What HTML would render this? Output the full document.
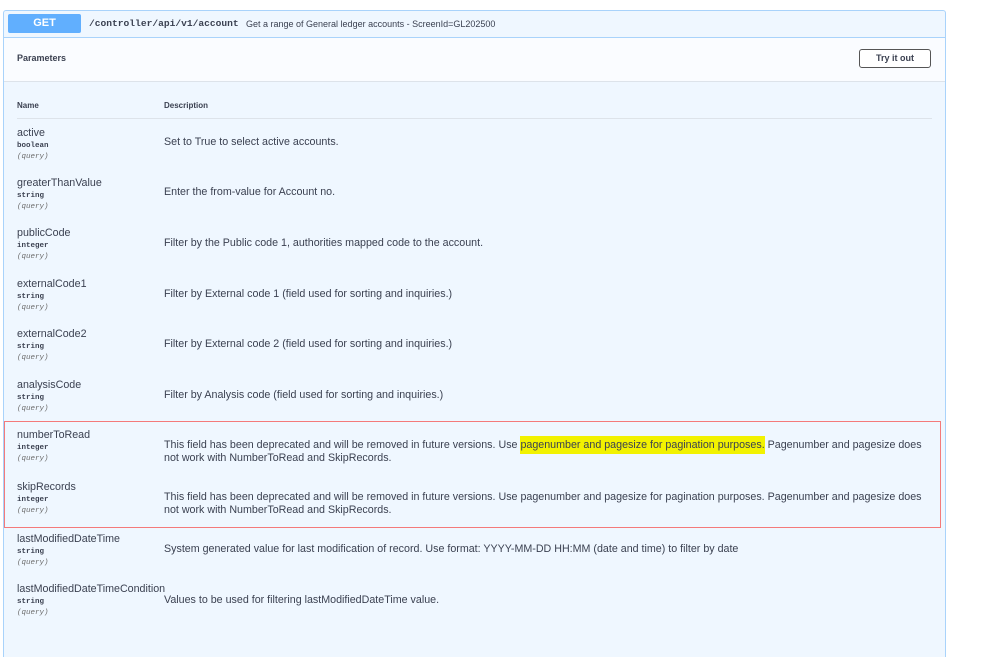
<!DOCTYPE html>
<html><head><style>
html,body{margin:0;width:999px;height:658px;overflow:hidden}
body{background:#fff;font-family:"Liberation Sans",sans-serif;color:#3b4151;position:relative}
.box{position:absolute;left:3px;top:10px;width:941px;height:646px;border:1px solid #a9d3fb;border-bottom:none;background:#eff7ff;border-radius:3px 3px 0 0}
.hdr{position:absolute;left:0;top:0;width:941px;height:26px;border-bottom:1px solid #a9d3fb}
.get{position:absolute;left:4px;top:3px;width:73px;height:19px;background:#61affe;border-radius:2px;color:#fff;font-weight:bold;font-size:11px;text-align:center;line-height:19px}
.path{position:absolute;left:85px;top:7px;font-family:"Liberation Mono",monospace;font-weight:bold;font-size:9.6px;color:#3b4151}
.sum{position:absolute;left:242px;top:8px;font-size:9px}
.ps{position:absolute;left:0;top:27px;width:941px;height:43px;background:#fafcff;border-bottom:1px solid #dde3ea}
.pt{position:absolute;left:13px;top:15px;font-weight:bold;font-size:9px}
.try{position:absolute;left:855px;top:11px;width:70px;height:17px;border:1.5px solid #555;border-radius:3px;background:#fff;font-weight:bold;font-size:9px;text-align:center;line-height:17px}
.th{position:absolute;top:101px;font-size:8px;font-weight:bold}
.line{position:absolute;left:17px;top:118px;width:915px;height:1px;background:#dde3ea}
.row{position:absolute;left:17px}
.n{font-size:10.7px;color:#3b4151}
.t{font-family:"Liberation Mono",monospace;font-size:7.5px;font-weight:bold;margin-top:3px}
.q{font-family:"Liberation Mono",monospace;font-size:7.5px;font-style:italic;color:#6b6b6b;margin-top:3px}
.d{position:absolute;left:164px;font-size:10.7px;width:770px;line-height:12.5px}
.red{position:absolute;left:4px;top:421px;width:935px;height:105px;border:1px solid #f47a7a}
mark{background:#f2f200;color:inherit;padding:3px 0}
</style></head><body>
<div class="box">
<div class="hdr"><div class="get">GET</div><div class="path">/controller/api/v1/account</div><div class="sum">Get a range of General ledger accounts - ScreenId=GL202500</div></div>
<div class="ps"><div class="pt">Parameters</div><div class="try">Try it out</div></div>
</div>
<div class="th" style="left:17px">Name</div><div class="th" style="left:164px">Description</div>
<div class="line"></div>
<div class="row" style="top:127px"><div class="n">active</div><div class="t">boolean</div><div class="q">(query)</div></div><div class="d" style="top:136px">Set to True to select active accounts.</div>
<div class="row" style="top:177px"><div class="n">greaterThanValue</div><div class="t">string</div><div class="q">(query)</div></div><div class="d" style="top:186px">Enter the from-value for Account no.</div>
<div class="row" style="top:227px"><div class="n">publicCode</div><div class="t">integer</div><div class="q">(query)</div></div><div class="d" style="top:237px">Filter by the Public code 1, authorities mapped code to the account.</div>
<div class="row" style="top:278px"><div class="n">externalCode1</div><div class="t">string</div><div class="q">(query)</div></div><div class="d" style="top:288px">Filter by External code 1 (field used for sorting and inquiries.)</div>
<div class="row" style="top:328px"><div class="n">externalCode2</div><div class="t">string</div><div class="q">(query)</div></div><div class="d" style="top:338px">Filter by External code 2 (field used for sorting and inquiries.)</div>
<div class="row" style="top:379px"><div class="n">analysisCode</div><div class="t">string</div><div class="q">(query)</div></div><div class="d" style="top:389px">Filter by Analysis code (field used for sorting and inquiries.)</div>
<div class="row" style="top:429px"><div class="n">numberToRead</div><div class="t">integer</div><div class="q">(query)</div></div><div class="d" style="top:439px">This field has been deprecated and will be removed in future versions. Use <mark>pagenumber and pagesize for pagination purposes.</mark> Pagenumber and pagesize does not work with NumberToRead and SkipRecords.</div>
<div class="row" style="top:481px"><div class="n">skipRecords</div><div class="t">integer</div><div class="q">(query)</div></div><div class="d" style="top:491px">This field has been deprecated and will be removed in future versions. Use pagenumber and pagesize for pagination purposes. Pagenumber and pagesize does not work with NumberToRead and SkipRecords.</div>
<div class="red"></div>
<div class="row" style="top:533px"><div class="n">lastModifiedDateTime</div><div class="t">string</div><div class="q">(query)</div></div><div class="d" style="top:543px">System generated value for last modification of record. Use format: YYYY-MM-DD HH:MM (date and time) to filter by date</div>
<div class="row" style="top:583px"><div class="n">lastModifiedDateTimeCondition</div><div class="t">string</div><div class="q">(query)</div></div><div class="d" style="top:594px">Values to be used for filtering lastModifiedDateTime value.</div>
</body></html>
